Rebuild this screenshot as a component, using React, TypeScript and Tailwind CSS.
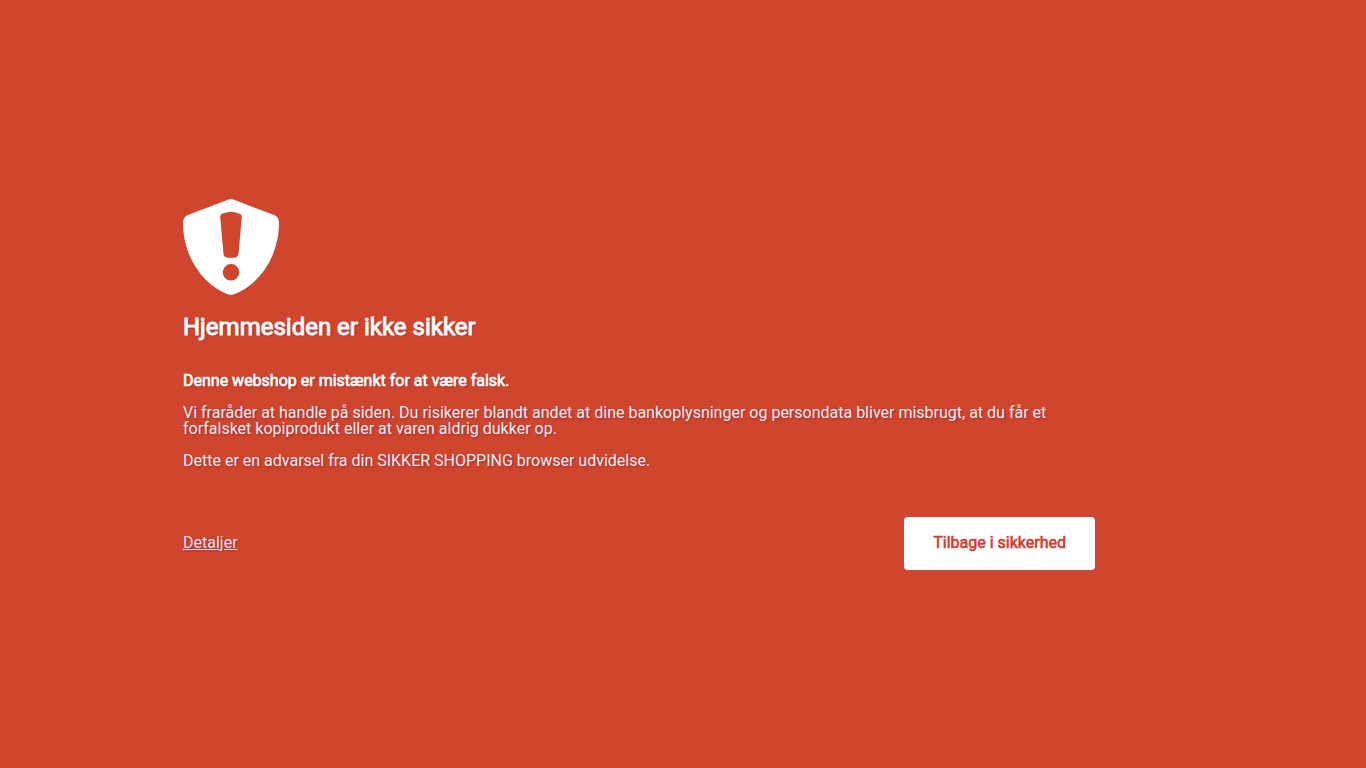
const ShieldIcon = () => (
  <svg viewBox="0 0 96 96" className="size-24 fill-white" aria-hidden="true">
    <path
      fillRule="evenodd"
      d="M45.500.6Q48-.6 50.500.6L90.500 15.800Q96 18 96 23.500C96 60 74 87 50.500 95.500Q48 96.400 45.500 95.500C22 87 0 60 0 23.500Q0 18 5.500 15.800ZM37.200 18C36.900 14.500 43 13 48 13C53 13 59.100 14.500 58.800 18L55.600 54Q55.200 58.800 51 58.800H45Q40.800 58.800 40.400 54ZM48 65a8.300 8.300 0 1 0 0 16.600a8.300 8.300 0 1 0 0-16.600Z"
    />
  </svg>
);

export const Warning = () => (
  <main className="flex min-h-screen items-center justify-center bg-[#d0452e] font-['Roboto',sans-serif] text-base leading-4 text-[#fbecf2]">
    <div className="w-full max-w-[1000px]">
      <div className="mr-[88px] [text-shadow:1px_1px_2px_rgba(60,20,60,0.4)]">
        <ShieldIcon />
        <h1 className="mt-5 text-2xl leading-6 text-white [-webkit-text-stroke:0.04em]">Hjemmesiden er ikke sikker</h1>
        <p className="mt-[34px] text-white [-webkit-text-stroke:0.04em]">Denne webshop er mistænkt for at være falsk.</p>
        <p className="mt-4">
          Vi fraråder at handle på siden. Du risikerer blandt andet at dine bankoplysninger og persondata bliver
          misbrugt, at du får et forfalsket kopiprodukt eller at varen aldrig dukker op.
        </p>
        <p className="mt-4">Dette er en advarsel fra din SIKKER SHOPPING browser udvidelse.</p>
        <div className="mt-12 flex items-center justify-between">
          <a href="#detaljer" className="text-[#f0e0f0] underline">
            Detaljer
          </a>
          <button
            type="button"
            className="h-[53px] rounded bg-white px-[29px] text-[#d63c30] [-webkit-text-stroke:0.04em] [text-shadow:none]"
          >
            Tilbage i sikkerhed
          </button>
        </div>
      </div>
    </div>
  </main>
);

export default Warning;
